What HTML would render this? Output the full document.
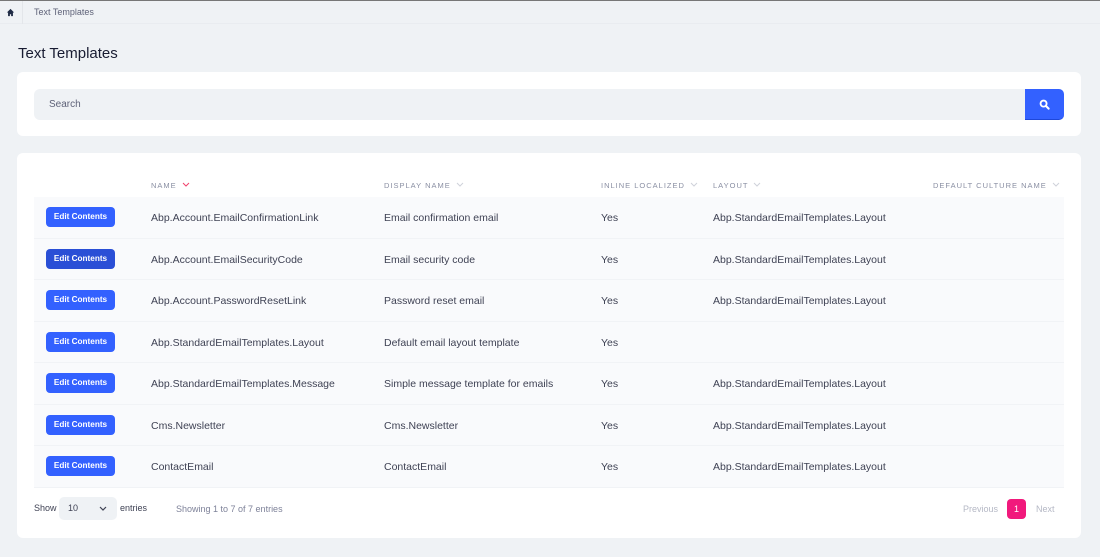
<!DOCTYPE html>
<html><head><meta charset="utf-8"><style>
*{box-sizing:border-box;margin:0;padding:0}
body{width:1100px;height:557px;background:#eff2f5;font-family:"Liberation Sans",sans-serif;color:#3f4254;position:relative;overflow:hidden}
.top{position:absolute;left:0;top:0;width:1100px;height:24px;border-top:1px solid #777;background:#eff2f5;border-bottom:1px solid #e9ecf0}
.top .sep{position:absolute;left:22px;top:0;width:1px;height:23px;background:#e3e6ea}
.top .bc{position:absolute;left:34px;top:6px;font-size:9px;color:#5e6278}
h1{position:absolute;left:18px;top:45px;font-size:15px;font-weight:normal;color:#181c32}
.card{position:absolute;left:17px;width:1064px;background:#fff;border-radius:6px}
.search{position:absolute;left:17px;top:17px;width:991px;height:31px;background:#eff2f5;border-radius:6px 0 0 6px;font-size:10px;color:#5e6278;padding:10px 15px}
.sbtn{position:absolute;left:1008px;top:17px;width:39px;height:31px;background:#3361ff;border-radius:0 5px 5px 0;border-bottom:1px solid #1e47d9}
.th{position:absolute;top:28px;font-size:7.5px;letter-spacing:1px;color:#8a8fa3}
.th svg{margin-left:5px;vertical-align:1px}
.row{position:absolute;left:17px;width:1030px;height:41.5px;background:#f9fafc;border-bottom:1px solid #f1f3f6;font-size:10.5px;color:#3f4254}
.row div{position:absolute;top:15px}
.btn{position:absolute;left:12px;top:10px!important;width:69px;height:20px;background:#3361ff;border-radius:4px;color:#fff;font-size:8px;font-weight:bold;text-align:center;line-height:20px;font-size:8.2px}
</style></head><body>
<div class="top"><svg style="position:absolute;left:6px;top:7px" width="9" height="9" viewBox="0 0 10 10"><path d="M5 1L1 5h1.3v4h2V7h1.4v2h2V5H9z" fill="#1e2a44"/></svg><div class="sep"></div><div class="bc">Text Templates</div></div>
<h1>Text Templates</h1>
<div class="card" style="top:72px;height:64px">
<div class="search">Search</div>
<div class="sbtn"><svg style="position:absolute;left:14px;top:10px" width="11" height="11" viewBox="0 0 12 12"><circle cx="5" cy="5" r="3.3" fill="none" stroke="#fff" stroke-width="2"/><path d="M7.5 7.5L10.5 10.5" stroke="#fff" stroke-width="2.2" stroke-linecap="round"/></svg></div>
</div>
<div class="card" style="top:153px;height:385px">
<div class="th" style="left:134px">NAME<svg width="8" height="5" viewBox="0 0 8 5"><path d="M1 1l3 3 3-3" fill="none" stroke="#f1416c" stroke-width="1"/></svg></div>
<div class="th" style="left:367px">DISPLAY NAME<svg width="8" height="5" viewBox="0 0 8 5"><path d="M1 1l3 3 3-3" fill="none" stroke="#cfd2da" stroke-width="1"/></svg></div>
<div class="th" style="left:584px">INLINE LOCALIZED<svg width="8" height="5" viewBox="0 0 8 5"><path d="M1 1l3 3 3-3" fill="none" stroke="#cfd2da" stroke-width="1"/></svg></div>
<div class="th" style="left:696px">LAYOUT<svg width="8" height="5" viewBox="0 0 8 5"><path d="M1 1l3 3 3-3" fill="none" stroke="#cfd2da" stroke-width="1"/></svg></div>
<div class="th" style="left:916px">DEFAULT CULTURE NAME<svg width="8" height="5" viewBox="0 0 8 5"><path d="M1 1l3 3 3-3" fill="none" stroke="#cfd2da" stroke-width="1"/></svg></div>

<div class="row" style="top:44px"><div class="btn">Edit Contents</div><div style="left:117px">Abp.Account.EmailConfirmationLink</div><div style="left:350px">Email confirmation email</div><div style="left:567px">Yes</div><div style="left:679px">Abp.StandardEmailTemplates.Layout</div></div>
<div class="row" style="top:85.5px"><div class="btn" style="background:#2a4fd6">Edit Contents</div><div style="left:117px">Abp.Account.EmailSecurityCode</div><div style="left:350px">Email security code</div><div style="left:567px">Yes</div><div style="left:679px">Abp.StandardEmailTemplates.Layout</div></div>
<div class="row" style="top:127px"><div class="btn">Edit Contents</div><div style="left:117px">Abp.Account.PasswordResetLink</div><div style="left:350px">Password reset email</div><div style="left:567px">Yes</div><div style="left:679px">Abp.StandardEmailTemplates.Layout</div></div>
<div class="row" style="top:168.5px"><div class="btn">Edit Contents</div><div style="left:117px">Abp.StandardEmailTemplates.Layout</div><div style="left:350px">Default email layout template</div><div style="left:567px">Yes</div></div>
<div class="row" style="top:210px"><div class="btn">Edit Contents</div><div style="left:117px">Abp.StandardEmailTemplates.Message</div><div style="left:350px">Simple message template for emails</div><div style="left:567px">Yes</div><div style="left:679px">Abp.StandardEmailTemplates.Layout</div></div>
<div class="row" style="top:251.5px"><div class="btn">Edit Contents</div><div style="left:117px">Cms.Newsletter</div><div style="left:350px">Cms.Newsletter</div><div style="left:567px">Yes</div><div style="left:679px">Abp.StandardEmailTemplates.Layout</div></div>
<div class="row" style="top:293px"><div class="btn">Edit Contents</div><div style="left:117px">ContactEmail</div><div style="left:350px">ContactEmail</div><div style="left:567px">Yes</div><div style="left:679px">Abp.StandardEmailTemplates.Layout</div></div>

<div style="position:absolute;left:17px;top:350px;font-size:9px;color:#3f4254">Show</div>
<div style="position:absolute;left:42px;top:344px;width:58px;height:23px;background:#eff2f5;border-radius:5px;font-size:9px;padding:6px 9px">10<svg style="position:absolute;left:40px;top:9px" width="8" height="5" viewBox="0 0 8 5"><path d="M1 1l3 3 3-3" fill="none" stroke="#3f4254" stroke-width="1.2"/></svg></div>
<div style="position:absolute;left:103px;top:350px;font-size:9px">entries</div>
<div style="position:absolute;left:159px;top:351px;font-size:9px;color:#7e8299">Showing 1 to 7 of 7 entries</div>
<div style="position:absolute;left:946px;top:351px;font-size:9px;color:#b5b8c5">Previous</div>
<div style="position:absolute;left:990px;top:346px;width:19px;height:20px;background:#f1197c;border-radius:4px;color:#fff;font-size:9px;text-align:center;line-height:20px">1</div>
<div style="position:absolute;left:1019px;top:351px;font-size:9px;color:#b5b8c5">Next</div>
</div>
</body></html>
